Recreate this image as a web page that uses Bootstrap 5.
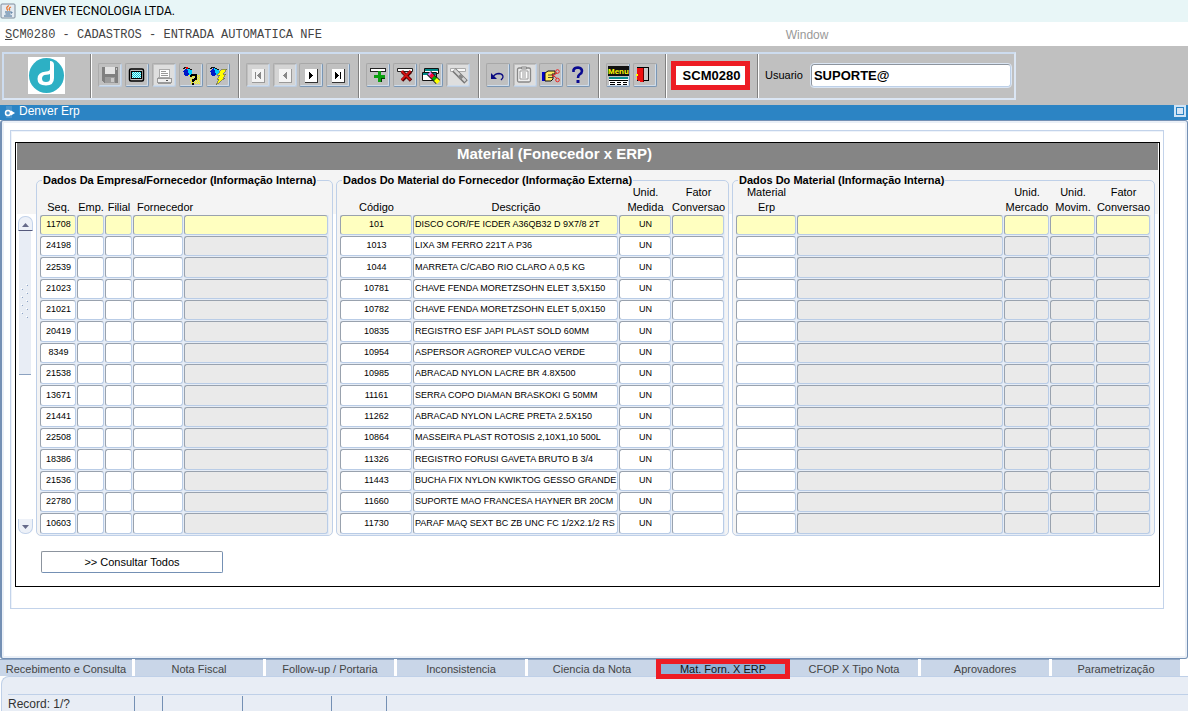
<!DOCTYPE html>
<html lang="pt-BR">
<head>
<meta charset="utf-8">
<meta name="viewport" content="width=device-width, initial-scale=1">
<title>DENVER TECNOLOGIA LTDA.</title>
<link href="https://cdn.jsdelivr.net/npm/bootstrap@5.3.0/dist/css/bootstrap.min.css" rel="stylesheet">
<style>
  body { font-family: "Liberation Sans", Arial, sans-serif; font-size: 11px; line-height: 15px; color: #000; background: #fff; }
  svg { display: block; }
  .app-title { height: 22px; background: #e8f6f7; font: 12px/22px Roboto, "Noto Sans", sans-serif; }
  .app-menu { height: 24px; font-size: 12px; padding: 2px 0 0 5px; }
  .app-menu a { color: #444; text-decoration: none; }
  .menu-path { font-family: "Liberation Mono", monospace; }
  .menu-path::first-letter { text-decoration: underline; }
  .menu-main { width: 66%; }
  .app-menu .menu-window { color: #999; }

  .tool-area { height: 59px; background: #c0c0c0; padding: 6px 0 5px 2px; }
  .tool-box { height: 48px; width: 1014px; max-width: 100%; border: 2px solid #dbe6f4; border-top-color: #cddcef; border-left-color: #cddcef; }
  .tool-sec { flex-shrink: 0; padding: 0 8px 2px 6px; border-right: 1px solid #808080; border-left: 1px solid #fff; }
  .tool-sec:first-child { border-left: 0; }
  .tool-sec:last-child { border-right: 0; padding-right: 4px; }
  .w-logo { width: 87px; } .w-five { width: 148px; } .w-four { width: 120px; } .w-two { width: 67px; } .w-code { width: 92px; }
  .tool-btn { width: 24px; height: 24px; padding: 0; border: 1px solid; border-color: #a8a8a8 #7a96b4 #7a96b4 #a8a8a8; border-radius: 2px; background: #c0c0c0; box-shadow: inset -1px -1px #cfdcea; }
  .tool-btn svg { margin: -1px; }
  .tool-btn:disabled { border-color: #acacac #bccde2 #bccde2 #acacac; }
  .code-box { border: 5px solid #ed1c24; background: #fff; width: 79px; height: 29px; font-size: 13px; font-weight: bold; line-height: 19px; text-align: center; padding-left: 2px; }
  .user-in { width: 200px; height: 23px; border: 1px solid; border-color: #8c949e #bdd0e8 #bdd0e8 #8c949e; border-radius: 3px; font-size: 13px; font-weight: bold; padding: 0 2px; outline: 1px solid #dbe6f4; }

  .win-title { height: 15px; background: #2c84c4; color: #fff; font-size: 12px; line-height: 13px; }
  .max-btn { width: 12px; height: 12px; border: 2px solid #cfe4f6; background: #2c84c4; padding: 1px; margin-right: 2px; }
  .max-btn span { display: block; height: 6px; background: #d5e6f6; }
  .win-body { border: 1px solid #7490b4; border-left-width: 2px; border-radius: 3px; background: #fff; box-shadow: inset 0 0 0 2px #ebf0f7; padding: 9px 23px 0 8px; }
  .outer-box { border: 1px solid #c3d3ea; box-shadow: inset 1px 1px #eef3fa; height: 479px; padding: 11px 3px 0 4px; }
  .inner-box { border: 1px solid #000; height: 445px; padding: 0 1px; }
  .bar-title { height: 27px; background: #858585; color: #fff; font-size: 15px; line-height: 22px; padding-right: 66px; }
  .groups { display: grid; grid-template-columns: 16px minmax(0, 297fr) minmax(0, 393fr) minmax(0, 423fr); gap: 3px; background: linear-gradient(#f4f4f4 44px, #fff 44px); padding: 4px 3px 0 0; }

  .scroll-col { padding-top: 42px; }
  .scroll-in { height: 318px; }
  .scroll-btn { width: 15px; height: 15px; padding: 0; border: 1px solid #c3d3ea; background: #edf1f8; }
  .scroll-btn.up { border-radius: 7px 7px 0 0; border-bottom: 1px solid #55597c; }
  .scroll-btn.down { border-radius: 0 0 7px 7px; border-top: 0; }
  .scroll-thumb { width: 12px; height: 144px; padding-bottom: 4px; background: #e8edf5; border-bottom: 1px solid #8ca2c0; }

  .group-box { border: 1px solid #bfd0e8; border-radius: 5px; background: #f4f4f4; padding: 0 3px; height: 362px; }
  .group-box legend { float: none; width: auto; height: 13px; margin: 0 0 0 2px; padding: 0 1px; font-size: 11px; font-weight: bold; line-height: 13px; white-space: nowrap; }
  .grid-tbl { width: 100%; margin-top: -2px; table-layout: fixed; border-collapse: collapse; }
  .grid-tbl th { height: 30px; padding: 0; font-weight: normal; line-height: 15px; text-align: center; vertical-align: bottom; white-space: nowrap; }
  .grid-tbl th.txt-left { text-align: left; padding-left: 4px; }
  .grid-tbl td { height: 21px; padding: 0 1px 1px 0; background: #e6edf7; }
  .grid-tbl tr:nth-child(3n) td { height: 22px; }
  .grid-tbl input { display: block; width: 100%; height: 20px; border: 1px solid; border-color: #99a2ae #b9cce6 #b9cce6 #99a2ae; border-radius: 3px; padding: 0 0 2px 1px; font-size: 9px; color: #000; background: #fff; text-align: center; }
  .grid-tbl tr:nth-child(3n) input { height: 21px; }
  .grid-tbl input.desc { text-align: left; }
  .grid-tbl input.lock { background: #eaeaea; }
  .grid-tbl tr:first-child input { background: #ffffc0; }
  .c28 { width: 28px; } .c37 { width: 37px; } .c46 { width: 46px; } .c51 { width: 51px; } .c53 { width: 53px; } .c55 { width: 55px; } .c61 { width: 61px; } .c73 { width: 73px; }

  .query-btn { width: 182px; height: 22px; margin: 15px 0 0 24px; border: 1px solid; border-color: #8c949e #7490b4 #7490b4 #8c949e; border-radius: 2px; background: #fff; line-height: 20px; padding: 0; }

  .tabs-row { display: grid; grid-template-columns: 132px repeat(8, minmax(0, 1fr)); height: 17px; gap: 3px; padding-right: 8px; background: #fff; position: relative; }
  .tab-btn { border: 0; border-top: 1px solid #8fa5c2; background: #c9d6e8; color: #444; padding: 3px 0 0; line-height: 13px; height: 17px; white-space: nowrap; }
  .tab-btn.active { height: 20px; border: 5px solid #ed1c24; background: #90b3d7; color: #111; padding: 0; line-height: 10px; margin: 0 -3px; }
  .status { height: 35px; background: #e8edf5; border: 1px solid #bfd0e8; border-right: 0; border-bottom: 0; border-radius: 8px 0 0 0; padding-top: 17px; font-size: 12px; line-height: 18px; color: #333; margin-left: 1px; }
  .status-line { border-top: 1px solid #bfd0e8; margin-left: 6px; height: 17px; }
  .status-line > div { border-right: 1px solid #7490b4; margin-top: 1px; line-height: 16px; }
  .s1 { width: 127px; } .s2 { width: 28px; } .s3 { width: 80px; } .s4 { width: 89px; } .s5 { width: 55px; }
</style>
</head>
<body>
<div class="d-flex flex-column vh-100 overflow-hidden">
  <header class="app-title d-flex align-items-center">
    <svg class="me-1" width="17" height="18" viewBox="0 0 17 18"><rect x="1" y="2" width="14" height="14" rx="1" fill="#e4ebf2" stroke="#7e8c9b"/><path d="M9 3.500q-4 2-1 5M11 5q-3 1-1 3.500" fill="none" stroke="#e8762c" stroke-width="1.300"/><path d="M5 10h6M5.500 12h5M4 14h8M11 10q2 0 .5 1.500" fill="none" stroke="#3e6891"/></svg>
    <span>DENVER TECNOLOGIA LTDA.</span>
  </header>
  <nav class="app-menu d-flex align-items-center">
    <div class="menu-main"><a href="#" class="menu-path d-inline-block">SCM0280 - CADASTROS - ENTRADA AUTOMATICA NFE</a></div>
    <a href="#" class="menu-window">Window</a>
  </nav>

  <div class="tool-area">
    <div class="tool-box d-flex">
      <div class="tool-sec w-logo d-flex align-items-center justify-content-center">
        <svg width="37" height="37" viewBox="0 0 37 37"><rect width="37" height="37" fill="#fff"/><circle cx="18.500" cy="18.500" r="17.500" fill="#2db0c4"/><path d="M22 4q4 0 4 4v13q0 7.500-8 7.500-8.500 0-8.500-6.500 0-7 8.500-7.500 4-.5 4-2.500z" fill="#fff"/><path d="M22 17v4.500q0 3.500-4 3.500t-4-3.500q0-3.500 4.500-3.800Q21 17.500 22 17z" fill="#2db0c4"/></svg>
      </div>
      <div class="tool-sec w-five d-flex align-items-center justify-content-between">
        <button class="tool-btn" disabled aria-label="Salvar"><svg width="24" height="24" shape-rendering="crispEdges"><path d="M4 4h16v16H6l-2-2z" fill="#808080"/><path d="M7 4h10v7H7z" fill="#e4e4e4"/><path d="M7 14h10v6H7z" fill="#9c9c9c"/><path d="M13 15h3v4h-3zM18 5h1v2h-1z" fill="#c8c8c8"/></svg></button>
        <button class="tool-btn" aria-label="Tela"><svg width="24" height="24"><defs><pattern id="dots" width="2" height="2" patternUnits="userSpaceOnUse"><rect width="2" height="2" fill="#d8f8f8"/><rect width="1" height="1" fill="#00c8d8"/><rect x="1" y="1" width="1" height="1" fill="#00c8d8"/></pattern></defs><rect x="4.500" y="6" width="14" height="12" rx="1.500" fill="#c0c0c0" stroke="#000" stroke-width="1.500"/><rect x="6.500" y="8.500" width="10" height="7" fill="url(#dots)" stroke="#000"/></svg></button>
        <button class="tool-btn" disabled aria-label="Imprimir"><svg width="24" height="24" shape-rendering="crispEdges"><path d="M2 2h20v20H2z" fill="#dedede"/><path d="M8 6h9v8H7z" fill="#fff" stroke="#aaa"/><path d="M9 8h5M9 10h7M9 12h7" stroke="#999"/><path d="M5 15h14v4H5z" fill="#eee" stroke="#999"/><path d="M6 20h13" stroke="#999"/><path d="M14 17h2" stroke="#555"/></svg></button>
        <button class="tool-btn" aria-label="Entrar consulta"><svg width="24" height="24" shape-rendering="crispEdges"><defs><pattern id="ydots" width="2" height="2" patternUnits="userSpaceOnUse"><rect width="1" height="1" fill="#ff0"/><rect x="1" y="1" width="1" height="1" fill="#ff0"/></pattern></defs><path d="M4 8l3-3 4 4-2 4H6z" fill="#0018c8"/><path d="M8 5l5 2v4l-3 1z" fill="#0cf"/><path d="M4 6l3-2 6 3" fill="none" stroke="#111"/><path d="M7 4h2v2H7z" fill="#e00"/><path d="M10 12h11v9H12z" fill="url(#ydots)"/><path d="M12 14v-1q0-1 2-1h3v4l-3 1v2M14 20v2" fill="none" stroke="#000" stroke-width="2"/></svg></button>
        <button class="tool-btn" aria-label="Executar consulta"><svg width="24" height="24" shape-rendering="crispEdges"><path d="M4 8l3-3 4 4-2 4H6z" fill="#0018c8"/><path d="M8 5l5 2v4l-3 1z" fill="#0cf"/><path d="M4 6l3-2 6 3" fill="none" stroke="#111"/><path d="M16 6h5l-4 5h3l-3 4h2l-9 7 3-6h-2l3-4h-3z" fill="#ff0" stroke="#555" stroke-width=".6"/></svg></button>
      </div>
      <div class="tool-sec w-four d-flex align-items-center justify-content-between">
        <button class="tool-btn" disabled aria-label="Primeiro"><svg width="24" height="24" shape-rendering="crispEdges"><path d="M2 2h20v20H2z" fill="#d4d4d4"/><path d="M6 6h12v13H6z" fill="#f4f4f4"/><path d="M6 19h12V6" fill="none" stroke="#999"/><path d="M9 9h1v7H9zM15 9v7l-4-3.500z" fill="#888"/></svg></button>
        <button class="tool-btn" disabled aria-label="Anterior"><svg width="24" height="24" shape-rendering="crispEdges"><path d="M2 2h20v20H2z" fill="#d4d4d4"/><path d="M6 6h12v13H6z" fill="#f4f4f4"/><path d="M6 19h12V6" fill="none" stroke="#999"/><path d="M14 9v7l-4-3.500z" fill="#888"/></svg></button>
        <button class="tool-btn" aria-label="Próximo"><svg width="24" height="24" shape-rendering="crispEdges"><path d="M6 6h12v13H6z" fill="#fff"/><path d="M6 19h12V6" fill="none" stroke="#333"/><path d="M10 9v7l4-3.500z" fill="#000"/></svg></button>
        <button class="tool-btn" aria-label="Último"><svg width="24" height="24" shape-rendering="crispEdges"><path d="M6 6h12v13H6z" fill="#fff"/><path d="M6 19h12V6" fill="none" stroke="#333"/><path d="M9 9v7l4-3.500zM14 9h1v7h-1z" fill="#000"/></svg></button>
      </div>
      <div class="tool-sec w-four d-flex align-items-center justify-content-between">
        <button class="tool-btn" aria-label="Inserir"><svg width="24" height="24" shape-rendering="crispEdges"><path d="M4.500 5.500h15v3h-15z" fill="#fff" stroke="#222"/><path d="M12 8h3v4h4v3h-4v4h-3v-4H8v-3h4z" fill="#0aa010"/><path d="M15 15.500h4M15.500 15v4" stroke="#043c04"/></svg></button>
        <button class="tool-btn" aria-label="Excluir"><svg width="24" height="24"><path d="M4.500 5.500h15v3h-15z" fill="#fff" stroke="#222"/><path d="M9 8.500l9 9M18 8.500l-9 9" stroke="#4a0000" stroke-width="3.400"/><path d="M8.500 8l9 9M17.500 8l-9 9" stroke="#d01010" stroke-width="2"/></svg></button>
        <button class="tool-btn" aria-label="Limpar bloco"><svg width="24" height="24"><path d="M5.500 5.500h14v5h-14zM3.500 9.500h14v8h-14z" fill="#fff" stroke="#111"/><path d="M6 6h13v2H6zM4 10h13v2H4z" fill="#088"/><path d="M10 10l9 9" stroke="#222" stroke-width="6"/><path d="M10 10l3 3" stroke="#e080ff" stroke-width="3.500"/><path d="M11.500 11.500l3 3" stroke="#f03" stroke-width="3.500"/><path d="M14 14l3 3" stroke="#0a0" stroke-width="3.500"/><path d="M16.500 16.500l3 3" stroke="#ff0" stroke-width="4"/></svg></button>
        <button class="tool-btn" disabled aria-label="Limpar registro"><svg width="24" height="24"><path d="M2 2h20v20H2z" fill="#dedede"/><path d="M4.500 5.500h15v3h-15z" fill="#f8f8f8" stroke="#aaa"/><path d="M8 7l12 12" stroke="#777" stroke-width="5"/><path d="M8.500 7l11 11" stroke="#d4d4d4" stroke-width="2.500"/><path d="M13 12.500l3 3" stroke="#888" stroke-width="4"/></svg></button>
      </div>
      <div class="tool-sec w-four d-flex align-items-center justify-content-between">
        <button class="tool-btn" aria-label="Desfazer"><svg width="24" height="24"><path d="M5 10v6h6z" fill="#0a0a80"/><path d="M7 14q2-3.500 6-3.500 4 .5 4 3.500 0 1-2 3" fill="none" stroke="#0a0a80" stroke-width="1.300"/></svg></button>
        <button class="tool-btn" disabled aria-label="Lista"><svg width="24" height="24"><path d="M2 2h20v20H2z" fill="#dedede"/><rect x="4.500" y="5" width="13" height="14" rx="1.500" fill="#eee" stroke="#888" stroke-width="1.300"/><path d="M7 8h8v8H7z" fill="#fff" stroke="#999"/><path d="M8.500 6V4h5v2z" fill="#ddd" stroke="#888"/><path d="M9 10h4M9 12h4M9 14h4" stroke="#999"/></svg></button>
        <button class="tool-btn" aria-label="Editar"><svg width="24" height="24"><path d="M3 9h3v9H3z" fill="#00c"/><path d="M6 10l3-2h7v3h-3l1 2v3l-2 2H6z" fill="#ffe860" stroke="#111"/><path d="M9 12h5M9 14.500h5" stroke="#222" stroke-width=".8"/><path d="M13 13.500l5-3.500M13 11.500l5 4" stroke="#e22"/><circle cx="18.500" cy="8.500" r="1.800" fill="none" stroke="#e22"/><circle cx="18.500" cy="17" r="1.800" fill="none" stroke="#e22"/></svg></button>
        <button class="tool-btn" aria-label="Ajuda"><svg width="24" height="24"><path d="M7.500 9V7q1-2.500 4.500-2.500 4 .5 4 3.500 0 2-2.500 3.500-1.500 1-1.500 3.500" fill="none" stroke="#0a0a90" stroke-width="2.600"/><path d="M10.500 17h3v3h-3z" fill="#0a0a90"/></svg></button>
      </div>
      <div class="tool-sec w-two d-flex align-items-center justify-content-between">
        <button class="tool-btn" aria-label="Menu"><svg width="24" height="24"><path d="M2 3h21v10H2z" fill="#111"/><text x="2" y="11" font-size="8" font-weight="bold" fill="#ff0">Menu</text><path d="M3 14h19v8H3z" fill="#fff"/><path d="M3 14h19v2H3z" fill="#089090"/><path d="M3 17.500h19" stroke="#000"/><path d="M4 19.500h5M11 19.500h4M17 19.500h4M4 21.500h5M11 21.500h4M17 21.500h4" stroke="#000"/></svg></button>
        <button class="tool-btn" aria-label="Sair"><svg width="24" height="24" shape-rendering="crispEdges"><path d="M4 4h12v14H4z" fill="#000"/><path d="M11 5h4v12h-4z" fill="#c8c8c8"/><path d="M4 5h6v14H8l-4-2z" fill="#f01010"/><path d="M10 5h1v14h-1z" fill="#600"/><path d="M3 11h2v2H3zM3 15h1v1H3z" fill="#ff0"/></svg></button>
      </div>
      <div class="tool-sec w-code d-flex align-items-center px-1">
        <output class="code-box" aria-label="Programa">SCM0280</output>
      </div>
      <div class="tool-sec flex-grow-1 d-flex align-items-center justify-content-end">
        <label for="usuario" class="me-2">Usuario</label>
        <input id="usuario" class="user-in" value="SUPORTE@">
      </div>
    </div>
  </div>

  <div class="win-title d-flex ps-1">
    <svg width="11" height="15" viewBox="0 0 11 15"><path d="M2 1h6v12H2z" fill="#4a94cc"/><circle cx="4" cy="8" r="2.500" fill="none" stroke="#fff" stroke-width="1.500"/><path d="M7 5.500v5l4-2.500z" fill="#fff"/></svg>
    <span class="ms-1 flex-grow-1">Denver Erp</span>
    <button class="max-btn" aria-label="Maximizar"><span></span></button>
  </div>

  <main class="win-body flex-grow-1">
    <div class="outer-box">
      <div class="inner-box">
        <h1 class="bar-title fw-bold text-center m-0">Material (Fonecedor x ERP)</h1>
        <div class="groups">
          <div class="scroll-col">
            <div class="scroll-in d-flex flex-column align-items-center">
              <button class="scroll-btn up" aria-label="Rolar para cima"><svg width="13" height="12"><path d="M3 9h7L6.500 5z" fill="#666a8a"/></svg></button>
              <div class="scroll-thumb d-flex align-items-center justify-content-center">
                <svg width="8" height="34"><defs><pattern id="grip" width="8" height="8" patternUnits="userSpaceOnUse"><path d="M1 5h1v1H1zM6 1h1v1H6z" fill="#8ca2c4"/><path d="M0 4h1v1H0zM5 0h1v1H5z" fill="#fff"/></pattern></defs><rect width="8" height="34" fill="url(#grip)"/></svg>
              </div>
              <button class="scroll-btn down mt-auto" aria-label="Rolar para baixo"><svg width="13" height="12"><path d="M3 5h7L6.500 9z" fill="#666a8a"/></svg></button>
            </div>
          </div>
          <fieldset class="group-box">
            <legend>Dados Da Empresa/Fornecedor (Informação Interna)</legend>
            <table class="grid-tbl" data-group="emp">
              <colgroup><col class="c37"><col class="c28"><col class="c28"><col class="c51"><col></colgroup>
              <thead><tr><th>Seq.</th><th>Emp.</th><th>Filial</th><th class="txt-left">Fornecedor</th><th></th></tr></thead>
              <tbody></tbody>
            </table>
          </fieldset>
          <fieldset class="group-box">
            <legend>Dados Do Material do Fornecedor (Informação Externa)</legend>
            <table class="grid-tbl" data-group="forn">
              <colgroup><col class="c73"><col><col class="c53"><col class="c53"></colgroup>
              <thead><tr><th>Código</th><th>Descrição</th><th>Unid.<br>Medida</th><th>Fator<br>Conversao</th></tr></thead>
              <tbody></tbody>
            </table>
          </fieldset>
          <fieldset class="group-box">
            <legend>Dados Do Material (Informação Interna)</legend>
            <table class="grid-tbl" data-group="mat">
              <colgroup><col class="c61"><col><col class="c46"><col class="c46"><col class="c55"></colgroup>
              <thead><tr><th>Material<br>Erp</th><th></th><th>Unid.<br>Mercado</th><th>Unid.<br>Movim.</th><th>Fator<br>Conversao</th></tr></thead>
              <tbody></tbody>
            </table>
          </fieldset>
        </div>
        <button class="query-btn">&gt;&gt; Consultar Todos</button>
      </div>
    </div>
  </main>

  <nav class="tabs-row" role="tablist">
    <button class="tab-btn" role="tab">Recebimento e Consulta</button>
    <button class="tab-btn" role="tab">Nota Fiscal</button>
    <button class="tab-btn" role="tab">Follow-up / Portaria</button>
    <button class="tab-btn" role="tab">Inconsistencia</button>
    <button class="tab-btn" role="tab">Ciencia da Nota</button>
    <button class="tab-btn active" role="tab" aria-selected="true">Mat. Forn. X ERP</button>
    <button class="tab-btn" role="tab">CFOP X Tipo Nota</button>
    <button class="tab-btn" role="tab">Aprovadores</button>
    <button class="tab-btn" role="tab">Parametrização</button>
  </nav>
  <footer class="status">
    <div class="status-line d-flex"><div class="s1">Record: 1/?</div><div class="s2"></div><div class="s3"></div><div class="s4"></div><div class="s5"></div></div>
  </footer>
</div>

<script src="https://cdn.jsdelivr.net/npm/bootstrap@5.3.0/dist/js/bootstrap.bundle.min.js"></script>
<script>
  const rows = [
    ["11708", "101", "DISCO COR/FE ICDER A36QB32 D 9X7/8 2T"],
    ["24198", "1013", "LIXA 3M FERRO 221T A P36"],
    ["22539", "1044", "MARRETA C/CABO RIO CLARO A 0,5 KG"],
    ["21023", "10781", "CHAVE FENDA MORETZSOHN ELET 3,5X150"],
    ["21021", "10782", "CHAVE FENDA MORETZSOHN ELET 5,0X150"],
    ["20419", "10835", "REGISTRO ESF JAPI PLAST SOLD 60MM"],
    ["8349", "10954", "ASPERSOR AGROREP VULCAO VERDE"],
    ["21538", "10985", "ABRACAD NYLON LACRE BR 4.8X500"],
    ["13671", "11161", "SERRA COPO DIAMAN BRASKOKI G 50MM"],
    ["21441", "11262", "ABRACAD NYLON LACRE PRETA 2.5X150"],
    ["22508", "10864", "MASSEIRA PLAST ROTOSIS 2,10X1,10 500L"],
    ["18386", "11326", "REGISTRO FORUSI GAVETA BRUTO B 3/4"],
    ["21536", "11443", "BUCHA FIX NYLON KWIKTOG GESSO GRANDE"],
    ["22780", "11660", "SUPORTE MAO FRANCESA HAYNER BR 20CM"],
    ["10603", "11730", "PARAF MAQ SEXT BC ZB UNC FC 1/2X2.1/2 RS"]
  ];
  // Each column: [label, value, extra class]
  const groups = {
    emp: r => [["Seq.", r[0]], ["Emp.", ""], ["Filial", ""], ["Fornecedor", ""], ["Nome do fornecedor", "", "lock"]],
    forn: r => [["Código", r[1]], ["Descrição", r[2], "desc"], ["Unid. Medida", "UN"], ["Fator Conversao", ""]],
    mat: () => [["Material Erp", ""], ["Descrição Erp", "", "lock"], ["Unid. Mercado", "", "lock"], ["Unid. Movim.", "", "lock"], ["Fator Conversao", "", "lock"]]
  };
  document.querySelectorAll("[data-group]").forEach(table => {
    table.tBodies[0].innerHTML = rows.map(r => "<tr>" + groups[table.dataset.group](r).map(([label, value, cls = ""]) =>
      `<td><input class="${cls}" aria-label="${label}" value="${value}"${cls === "lock" ? " readonly" : ""}></td>`).join("") + "</tr>").join("");
  });
</script>
</body>
</html>
